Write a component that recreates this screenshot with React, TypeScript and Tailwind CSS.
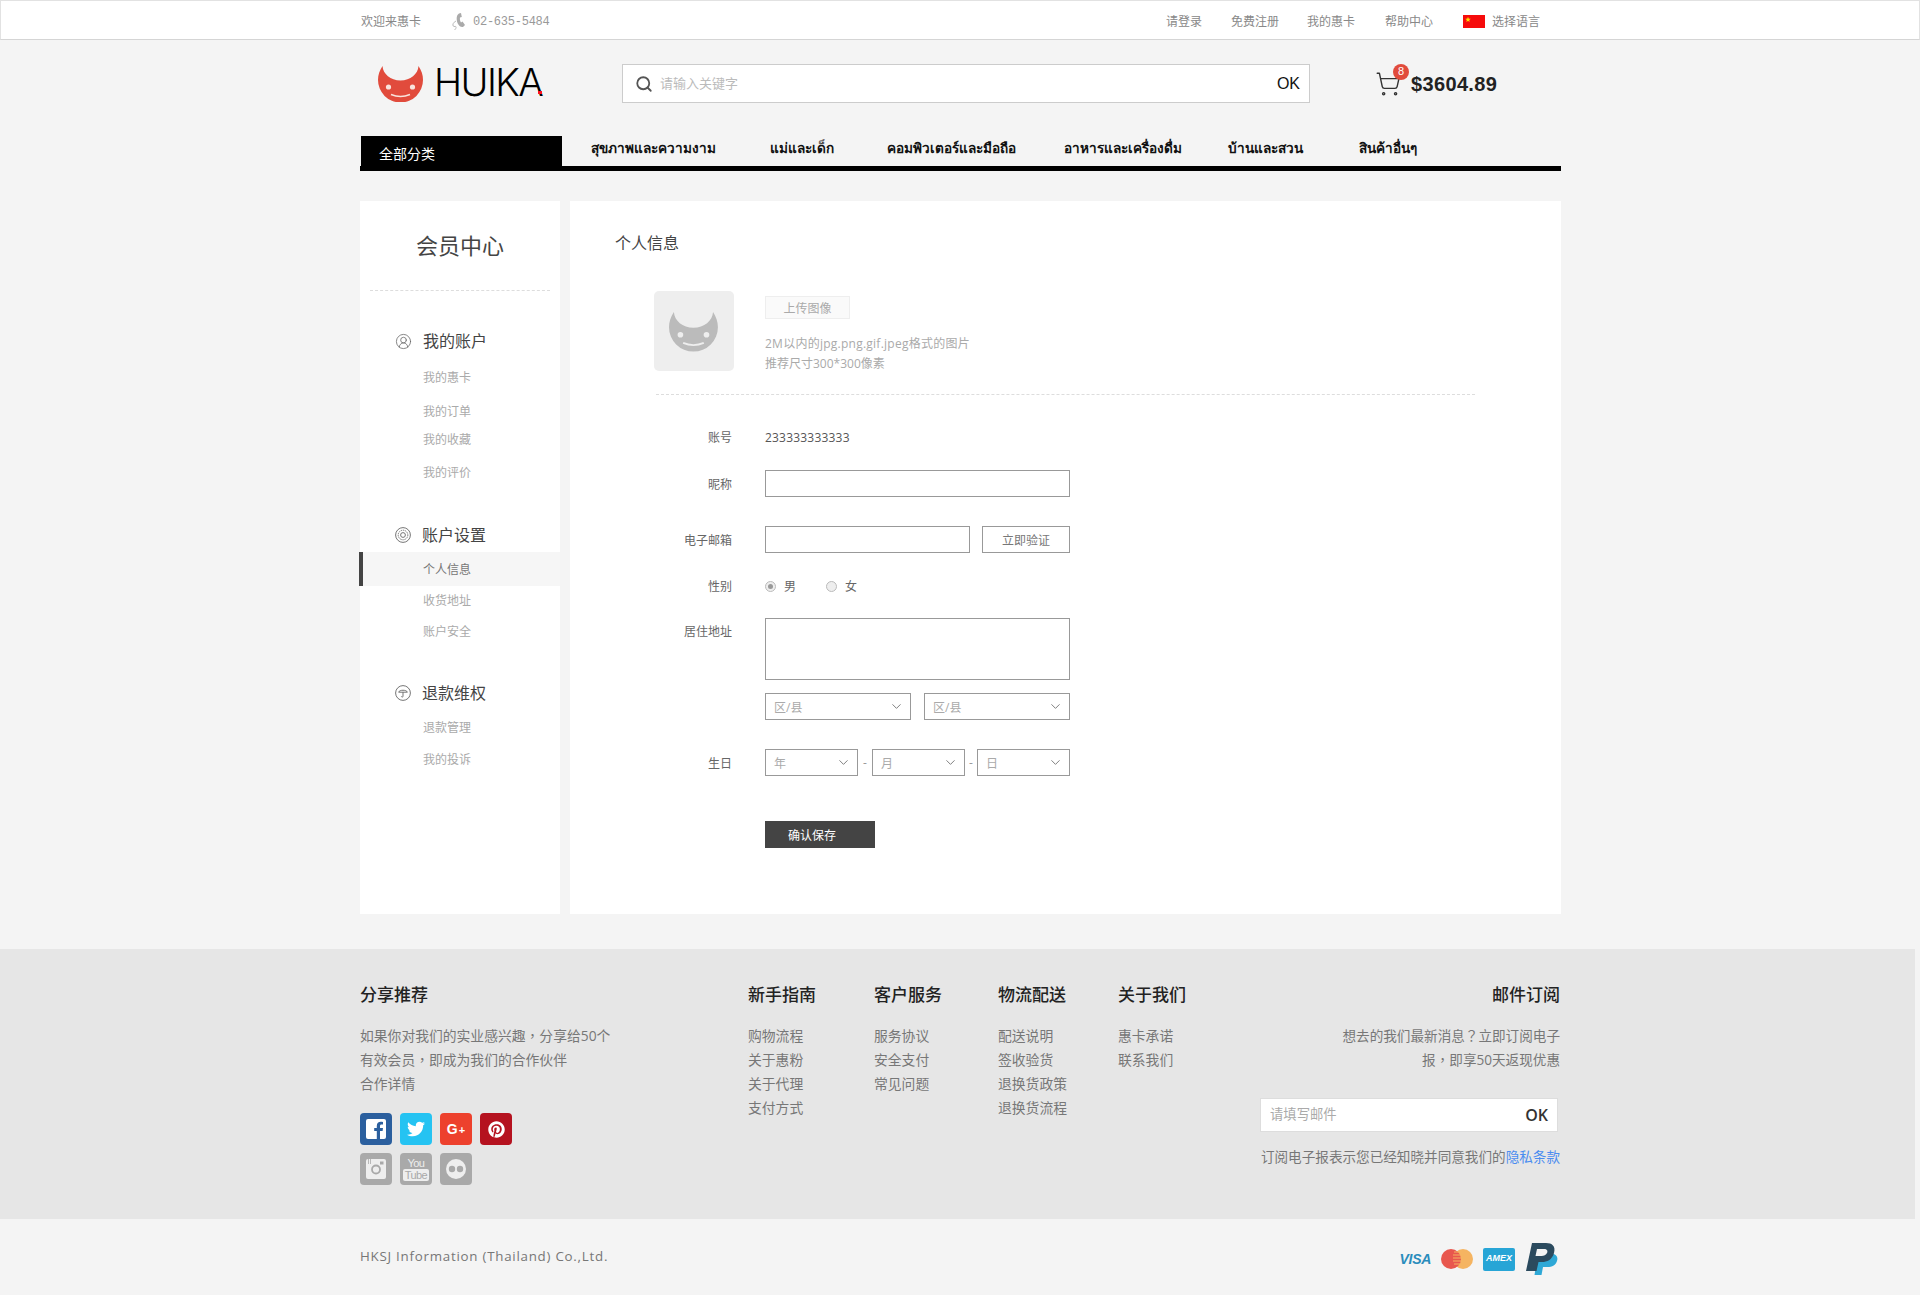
import { ChevronDown, CircleUserRound, Search, ShoppingCart } from 'lucide-react';
import { FaPinterest, FaTwitter } from 'react-icons/fa';

const navItems = [
  { label: 'สุขภาพและความงาม', className: 'ml-[29px] w-[125px]' },
  { label: 'แม่และเด็ก', className: 'ml-[54px] w-[65px]' },
  { label: 'คอมพิวเตอร์และมือถือ', className: 'ml-[52px] w-[133px]' },
  { label: 'อาหารและเครื่องดื่ม', className: 'ml-[44px] w-[120px]' },
  { label: 'บ้านและสวน', className: 'ml-[44px] w-[76px]' },
  { label: 'สินค้าอื่นๆ', className: 'ml-[55px] w-[61px]' },
];

const footerColumns = [
  { title: '新手指南', className: 'w-[126px]', links: ['购物流程', '关于惠粉', '关于代理', '支付方式'] },
  { title: '客户服务', className: 'w-[124px]', links: ['服务协议', '安全支付', '常见问题'] },
  { title: '物流配送', className: 'w-[120px]', links: ['配送说明', '签收验货', '退换货政策', '退换货流程'] },
  { title: '关于我们', className: 'w-[100px]', links: ['惠卡承诺', '联系我们'] },
];

function Logo({ fill, face, className }: { fill: string; face: string; className: string }) {
  return (
    <svg viewBox="0 0 46 36" className={className}>
      <path
        d="M4.5 0C1.5 4.5 0 9 0 14a22.5 22.5 0 0 0 45 0C45 9 43.5 4.5 40.5 0C40 8 32.5 14.5 22.5 14.5C12.5 14.5 5 8 4.5 0Z"
        fill={fill}
      />
      <circle cx="10.5" cy="21" r="2.6" fill={face} />
      <circle cx="34.5" cy="21" r="2.6" fill={face} />
      <path d="M13 28.5Q22.5 32.5 32 28.5" fill="none" stroke={face} strokeWidth="1.6" />
    </svg>
  );
}

function SettingsRing() {
  return (
    <svg viewBox="0 0 16 16" className="h-4 w-4" fill="none" stroke="#666" strokeWidth="0.9">
      <circle cx="8" cy="8" r="7.4" />
      <circle cx="8" cy="8" r="4.8" strokeDasharray="1.4 0.8" />
      <circle cx="8" cy="8" r="2.4" />
    </svg>
  );
}

function UmbrellaRing() {
  return (
    <svg viewBox="0 0 16 16" className="h-4 w-4" fill="none" stroke="#666" strokeWidth="0.9">
      <circle cx="8" cy="8" r="7.4" />
      <path d="M3.6 7.2C4.4 4.6 11.6 4.6 12.4 7.2Z" />
      <path d="M8 7.2V11.2C8 12.4 6.6 12.4 6.4 11.4" />
    </svg>
  );
}

function Comma({ mark }: { mark: string }) {
  return <span className="font-['Noto_Sans_CJK_TC',sans-serif] leading-none">{mark}</span>;
}

function SideTitle({ label, icon, className }: { label: string; icon: React.ReactNode; className: string }) {
  return (
    <div className={`flex h-6 items-center pl-[35px] text-[16px] text-[#444] ${className}`}>
      {icon}
      <span className="ml-[11px]">{label}</span>
    </div>
  );
}

function SideLink({ label, className }: { label: string; className: string }) {
  return <div className={`h-5 pl-[63px] text-[12px] leading-[22px] text-[#aaa] ${className}`}>{label}</div>;
}

function Row({ label, className, children }: { label: string; className: string; children: React.ReactNode }) {
  return (
    <div className={`flex items-center ${className}`}>
      <div className="w-[117px] pt-[2px] text-right text-[12px] text-[#666]">{label}</div>
      <div className="ml-[33px] flex items-center">{children}</div>
    </div>
  );
}

function FakeSelect({ label, className }: { label: string; className: string }) {
  return (
    <div className={`flex h-[27px] items-center justify-between border border-[#999] pl-[8px] pr-[6px] text-[12px] text-[#aaa] ${className}`}>
      <span className="pt-[2px]">{label}</span>
      <ChevronDown className="h-[15px] w-[15px] text-[#555]" strokeWidth={1.2} />
    </div>
  );
}

function Social({ className, children }: { className: string; children: React.ReactNode }) {
  return <div className={`flex h-8 w-8 items-center justify-center rounded-[4px] text-white ${className}`}>{children}</div>;
}

export default function App() {
  return (
    <div className="h-[1295px] overflow-hidden bg-[#f4f4f4] font-['Open_Sans','Noto_Sans_CJK_SC',sans-serif]">
      {/* Top bar */}
      <div className="h-[40px] border border-[#e2e2e2] border-b-[#d5d5d5] bg-white">
        <div className="mx-auto flex h-[38px] w-[1200px] items-center pt-[3px] text-[12px] text-[#888]">
          <span className="ml-px">欢迎来惠卡</span>
          <svg viewBox="0 0 16 20" className="ml-[30px] h-[20px] w-[16px]" fill="none">
            <path d="M8 1.5C5.5 3 5 7 6.5 11C7.5 13.5 10 15.5 12 15L14 13L11.5 9.5L10 10.5C9 9 8.7 7 9 5.5L10.8 5L10 1Z" fill="#aaa" />
            <path d="M5 9C1 11 1 15 4 14.5C6 14 5 17 3.5 18" stroke="#bbb" strokeWidth="1" />
          </svg>
          <span className="ml-[6px] font-['Liberation_Mono',monospace] tracking-[-0.25px] text-[#999]">02-635-5484</span>
          <div className="ml-auto flex items-center">
            <span>请登录</span>
            <span className="ml-[29px]">免费注册</span>
            <span className="ml-[28px]">我的惠卡</span>
            <span className="ml-[30px]">帮助中心</span>
            <span className="relative ml-[30px] h-[13px] w-[22px] bg-[#f60b0b]">
              <span className="absolute left-[2px] top-0 text-[6px] leading-[8px] text-[#ffde00]">★</span>
            </span>
            <span className="ml-[7px] mr-[20px]">选择语言</span>
          </div>
        </div>
      </div>

      <div className="mx-auto w-[1200px]">
        {/* Logo, search, cart */}
        <div className="mt-[24px] flex h-[39px] items-center">
          <Logo fill="#e14b3c" face="#f9e3dc" className="ml-[18px] h-[36px] w-[46px]" />
          <div className="relative ml-[10px] h-[39px] w-[110px]">
            <span className="absolute left-0 top-[-5px] font-['Inter',sans-serif] text-[38px] font-light leading-[46px] tracking-[-1.6px] text-black">
              HUIKA
            </span>
            <span className="absolute left-[104px] top-[27px] h-[3px] w-[4px] bg-[#ff1020]" />
          </div>
          <div className="ml-[78px] flex h-[39px] w-[688px] items-center border border-[#ccc] bg-white">
            <Search className="ml-[12px] h-[18px] w-[18px] text-[#555]" strokeWidth={2.4} />
            <input
              placeholder="请输入关键字"
              className="ml-[7px] flex-1 bg-transparent text-[13px] outline-none placeholder:text-[#bbb]"
            />
            <span className="mr-[9px] font-['Liberation_Sans',sans-serif] text-[16px] text-[#111]">OK</span>
          </div>
          <div className="relative ml-[65px] flex items-center">
            <ShoppingCart className="h-[26px] w-[26px] text-[#333]" strokeWidth={1.3} />
            <span className="absolute left-[18px] top-[-5px] flex h-4 w-4 items-center justify-center rounded-full bg-[#e14b3c] font-['Liberation_Sans',sans-serif] text-[11px] text-white">
              8
            </span>
            <span className="ml-[10px] font-['Liberation_Sans',sans-serif] text-[20px] font-bold tracking-[0.35px] text-[#222]">
              $3604.89
            </span>
          </div>
        </div>

        {/* Category nav */}
        <div className="mt-[33px] flex h-[35px] w-[1201px] border-b-[5px] border-black">
          <div className="ml-px flex w-[201px] items-center bg-black pl-[18px] pt-[4px] text-[14px] text-white">全部分类</div>
          {navItems.map((item) => (
            <div
              key={item.label}
              className={`whitespace-nowrap pt-[1px] text-[13.6px] font-bold leading-[22px] text-[#111] ${item.className}`}
            >
              {item.label}
            </div>
          ))}
        </div>

        {/* Member center */}
        <div className="mt-[30px] flex h-[713px] w-[1201px]">
          <div className="w-[200px] bg-white">
            <div className="mx-[10px] flex h-[90px] items-center justify-center border-b border-dashed border-[#ddd] pb-[1px] text-[22px] text-[#444]">
              会员中心
            </div>
            <SideTitle label="我的账户" icon={<CircleUserRound className="h-[17px] w-[17px] text-[#666]" strokeWidth={1.1} />} className="mt-[38px]" />
            <SideLink label="我的惠卡" className="mt-[14px]" />
            <SideLink label="我的订单" className="mt-[14px]" />
            <SideLink label="我的收藏" className="mt-[8px]" />
            <SideLink label="我的评价" className="mt-[13px]" />
            <SideTitle label="账户设置" icon={<SettingsRing />} className="mt-[41px]" />
            <div className="mt-[5px] -ml-px flex h-[34px] items-center border-l-[4px] border-[#444] bg-[#f6f6f6] pl-[60px] pt-[2px] text-[12px] text-[#777]">
              个人信息
            </div>
            <SideLink label="收货地址" className="mt-[4px]" />
            <SideLink label="账户安全" className="mt-[11px]" />
            <SideTitle label="退款维权" icon={<UmbrellaRing />} className="mt-[40px]" />
            <SideLink label="退款管理" className="mt-[12px]" />
            <SideLink label="我的投诉" className="mt-[12px]" />
          </div>

          <div className="ml-[10px] flex-1 bg-white pl-[45px]">
            <div className="mt-[30px] h-6 text-[16px] leading-6 text-[#444]">个人信息</div>

            <div className="ml-[39px] mt-[36px] flex h-[80px]">
              <div className="flex h-[80px] w-[80px] items-center justify-center rounded-[5px] bg-[#eeeeee]">
                <Logo fill="#bbbbbb" face="#eeeeee" className="h-[41px] w-[50px]" />
              </div>
              <div className="ml-[31px]">
                <div className="mt-[5px] flex h-[23px] w-[85px] items-center justify-center border border-[#eee] bg-[#fafafa] pt-[2px] text-[12px] text-[#aaa]">
                  上传图像
                </div>
                <div className="mt-[15px] text-[12px] leading-5 text-[#aaa]">
                  <div className="tracking-[0.25px]">2M以内的jpg.png.gif.jpeg格式的图片</div>
                  <div>推荐尺寸300*300像素</div>
                </div>
              </div>
            </div>
            <div className="ml-[41px] mt-[23px] w-[819px] border-b border-dashed border-[#ddd]" />

            <Row label="账号" className="mt-[30px] h-6">
              <span className="pt-[2px] text-[12px] tracking-[0.2px] text-[#555]">233333333333</span>
            </Row>
            <Row label="昵称" className="mt-[21px] h-[27px]">
              <input className="h-[27px] w-[305px] border border-[#999] outline-none" />
            </Row>
            <Row label="电子邮箱" className="mt-[29px] h-[27px]">
              <input className="h-[27px] w-[205px] border border-[#999] outline-none" />
              <div className="ml-[12px] flex h-[27px] w-[88px] items-center justify-center border border-[#999] pt-[2px] text-[12px] text-[#777]">
                立即验证
              </div>
            </Row>
            <Row label="性别" className="mt-[23px] h-5">
              <span className="flex h-[11px] w-[11px] items-center justify-center rounded-full border border-[#bbb] bg-[#eee]">
                <span className="h-[5px] w-[5px] rounded-full bg-[#999]" />
              </span>
              <span className="ml-[8px] pt-[2px] text-[12px] text-[#666]">男</span>
              <span className="ml-[30px] h-[11px] w-[11px] rounded-full border border-[#bbb] bg-[#eee]" />
              <span className="ml-[8px] pt-[2px] text-[12px] text-[#666]">女</span>
            </Row>

            <div className="mt-[22px] flex">
              <div className="mt-[4px] h-5 w-[117px] text-right text-[12px] leading-5 text-[#666]">居住地址</div>
              <div className="ml-[33px]">
                <textarea className="block h-[62px] w-[305px] resize-none border border-[#999] outline-none" />
                <div className="mt-[13px] flex w-[305px] justify-between">
                  <FakeSelect label="区/县" className="w-[146px]" />
                  <FakeSelect label="区/县" className="w-[146px]" />
                </div>
              </div>
            </div>

            <Row label="生日" className="mt-[29px] h-[27px]">
              <FakeSelect label="年" className="w-[93px]" />
              <span className="w-[14px] text-center text-[12px] text-[#999]">-</span>
              <FakeSelect label="月" className="w-[93px]" />
              <span className="w-[12px] text-center text-[12px] text-[#999]">-</span>
              <FakeSelect label="日" className="w-[93px]" />
            </Row>

            <div className="ml-[150px] mt-[45px] flex h-[27px] w-[110px] items-center bg-[#444] pl-[23px] pt-[2px] text-[12px] text-white">
              确认保存
            </div>
          </div>
        </div>
      </div>

      {/* Footer */}
      <div className="mt-[35px] h-[270px] w-[1915px] bg-[#e6e6e6] pl-[360px] pt-[34px]">
        <div className="flex w-[1200px]">
          <div className="w-[388px]">
            <div className="text-[17px] font-medium leading-6 text-[#222]">分享推荐</div>
            <div className="mt-[17px] text-[13.8px] leading-6 text-[#777]">
              <div>
                如果你对我们的实业感兴趣<Comma mark="，" />分享给50个
              </div>
              <div>
                有效会员<Comma mark="，" />即成为我们的合作伙伴
              </div>
              <div>合作详情</div>
            </div>
            <div className="mt-[17px] flex gap-2">
              <Social className="bg-[#2b5f9e]">
                <span className="relative h-[20px] w-[20px] overflow-hidden rounded-[2px] bg-white">
                  <svg viewBox="0 0 20 20" className="h-[20px] w-[20px]">
                    <path d="M14 20V12H16.6L17 9H14V7.2C14 6.2 14.4 5.6 15.6 5.6H17V3C16.4 2.9 15.6 2.8 14.8 2.8C12.4 2.8 10.8 4.2 10.8 6.9V9H8.2V12H10.8V20Z" fill="#2b5f9e" />
                  </svg>
                </span>
              </Social>
              <Social className="bg-[#25c3f2]">
                <FaTwitter className="h-[18px] w-[18px]" />
              </Social>
              <Social className="bg-[#ed412d]">
                <span className="font-['Liberation_Sans',sans-serif] text-[14px] font-bold">
                  G<span className="ml-px text-[11px]">+</span>
                </span>
              </Social>
              <Social className="bg-[#b5121f]">
                <FaPinterest className="h-[17px] w-[17px]" />
              </Social>
            </div>
            <div className="mt-2 flex gap-2">
              <Social className="bg-[#a9a9a9]">
                <svg viewBox="0 0 20 20" className="h-[20px] w-[20px]">
                  <rect width="20" height="20" rx="2" fill="#eeeeee" />
                  <circle cx="10" cy="10.5" r="4" fill="none" stroke="#a9a9a9" strokeWidth="1.8" />
                  <rect x="14" y="2.5" width="3.5" height="3" fill="#a9a9a9" />
                  <path d="M2.5 0V5M4.5 0V5" stroke="#a9a9a9" strokeWidth="0.8" />
                </svg>
              </Social>
              <Social className="flex-col bg-[#a9a9a9]">
                <span className="font-['Liberation_Sans',sans-serif] text-[11px] leading-[11px] tracking-[-0.6px] text-[#eee]">You</span>
                <span className="rounded-[2px] bg-[#eee] px-[2px] font-['Liberation_Sans',sans-serif] text-[11px] leading-[12px] tracking-[-0.6px] text-[#a9a9a9]">Tube</span>
              </Social>
              <Social className="bg-[#a9a9a9]">
                <svg viewBox="0 0 20 20" className="h-[20px] w-[20px]">
                  <circle cx="10" cy="10" r="10" fill="#eeeeee" />
                  <circle cx="6" cy="10" r="3.2" fill="#a9a9a9" />
                  <circle cx="14" cy="10" r="3.2" fill="#a9a9a9" />
                </svg>
              </Social>
            </div>
          </div>

          {footerColumns.map((col) => (
            <div key={col.title} className={col.className}>
              <div className="text-[17px] font-medium leading-6 text-[#222]">{col.title}</div>
              <div className="mt-[17px] text-[13.8px] leading-6 text-[#777]">
                {col.links.map((link) => (
                  <div key={link}>{link}</div>
                ))}
              </div>
            </div>
          ))}

          <div className="flex-1 text-right">
            <div className="text-[17px] font-medium leading-6 text-[#222]">邮件订阅</div>
            <div className="mt-[17px] text-[13.6px] leading-6 text-[#777]">
              <div>
                想去的我们最新消息<Comma mark="？" />立即订阅电子
              </div>
              <div>
                报<Comma mark="，" />即享50天返现优惠
              </div>
            </div>
            <div className="ml-auto mr-[2px] mt-[26px] flex h-[34px] w-[298px] items-center justify-between border border-[#ddd] bg-white pl-[9px] pr-[9px]">
              <input placeholder="请填写邮件" className="w-[120px] bg-transparent text-[13.33px] outline-none placeholder:text-[#aaa]" />
              <span className="text-[16px] font-semibold text-[#333]">OK</span>
            </div>
            <div className="mt-[13px] flex justify-end whitespace-nowrap text-[13.6px] leading-6 text-[#777]">
              订阅电子报表示您已经知晓并同意我们的<span className="text-[#4a8cf0]">隐私条款</span>
            </div>
          </div>
        </div>
      </div>

      {/* Copyright and payment */}
      <div className="mx-auto flex h-[76px] w-[1200px] items-center justify-between">
        <span className="text-[13.33px] tracking-[0.75px] text-[#777]">HKSJ Information (Thailand) Co.,Ltd.</span>
        <div className="mr-[2px] mt-[4px] flex items-center">
          <span className="font-['Liberation_Sans',sans-serif] text-[14px] font-bold italic tracking-[-0.3px] text-[#2a8cbc]">VISA</span>
          <svg viewBox="0 0 32 20" className="ml-[10px] h-[20px] w-[32px]">
            <circle cx="22" cy="10" r="10" fill="#f5b461" />
            <circle cx="10" cy="10" r="10" fill="#e8574e" />
            <path d="M13 3H19M12 6H20M12 9H20M12 12H20M13 15H19" stroke="#f5b461" strokeWidth="1" />
          </svg>
          <span className="ml-[10px] flex h-[23px] w-[32px] items-center justify-center rounded-[2px] bg-[#27a5d6] font-['Liberation_Sans',sans-serif] text-[9px] font-bold italic text-white">
            AMEX
          </span>
          <svg viewBox="0 0 32 32" className="ml-[11px] h-[32px] w-[32px]">
            <path d="M12 10H22C27 10 33 12 31 18C29 24 24 24 20 24H17L15.5 32H8.5Z" fill="#2ea8d6" />
            <path d="M6 0H20C26 0 30 3 28 10C26 17 21 19 16 19H12.5L10.5 28H0Z" fill="#2b4a5e" />
            <path d="M11 6H18C21 6 22 8 21 10C20 12 18 13 15.5 13H9.5Z" fill="#f4f4f4" />
          </svg>
        </div>
      </div>
    </div>
  );
}
